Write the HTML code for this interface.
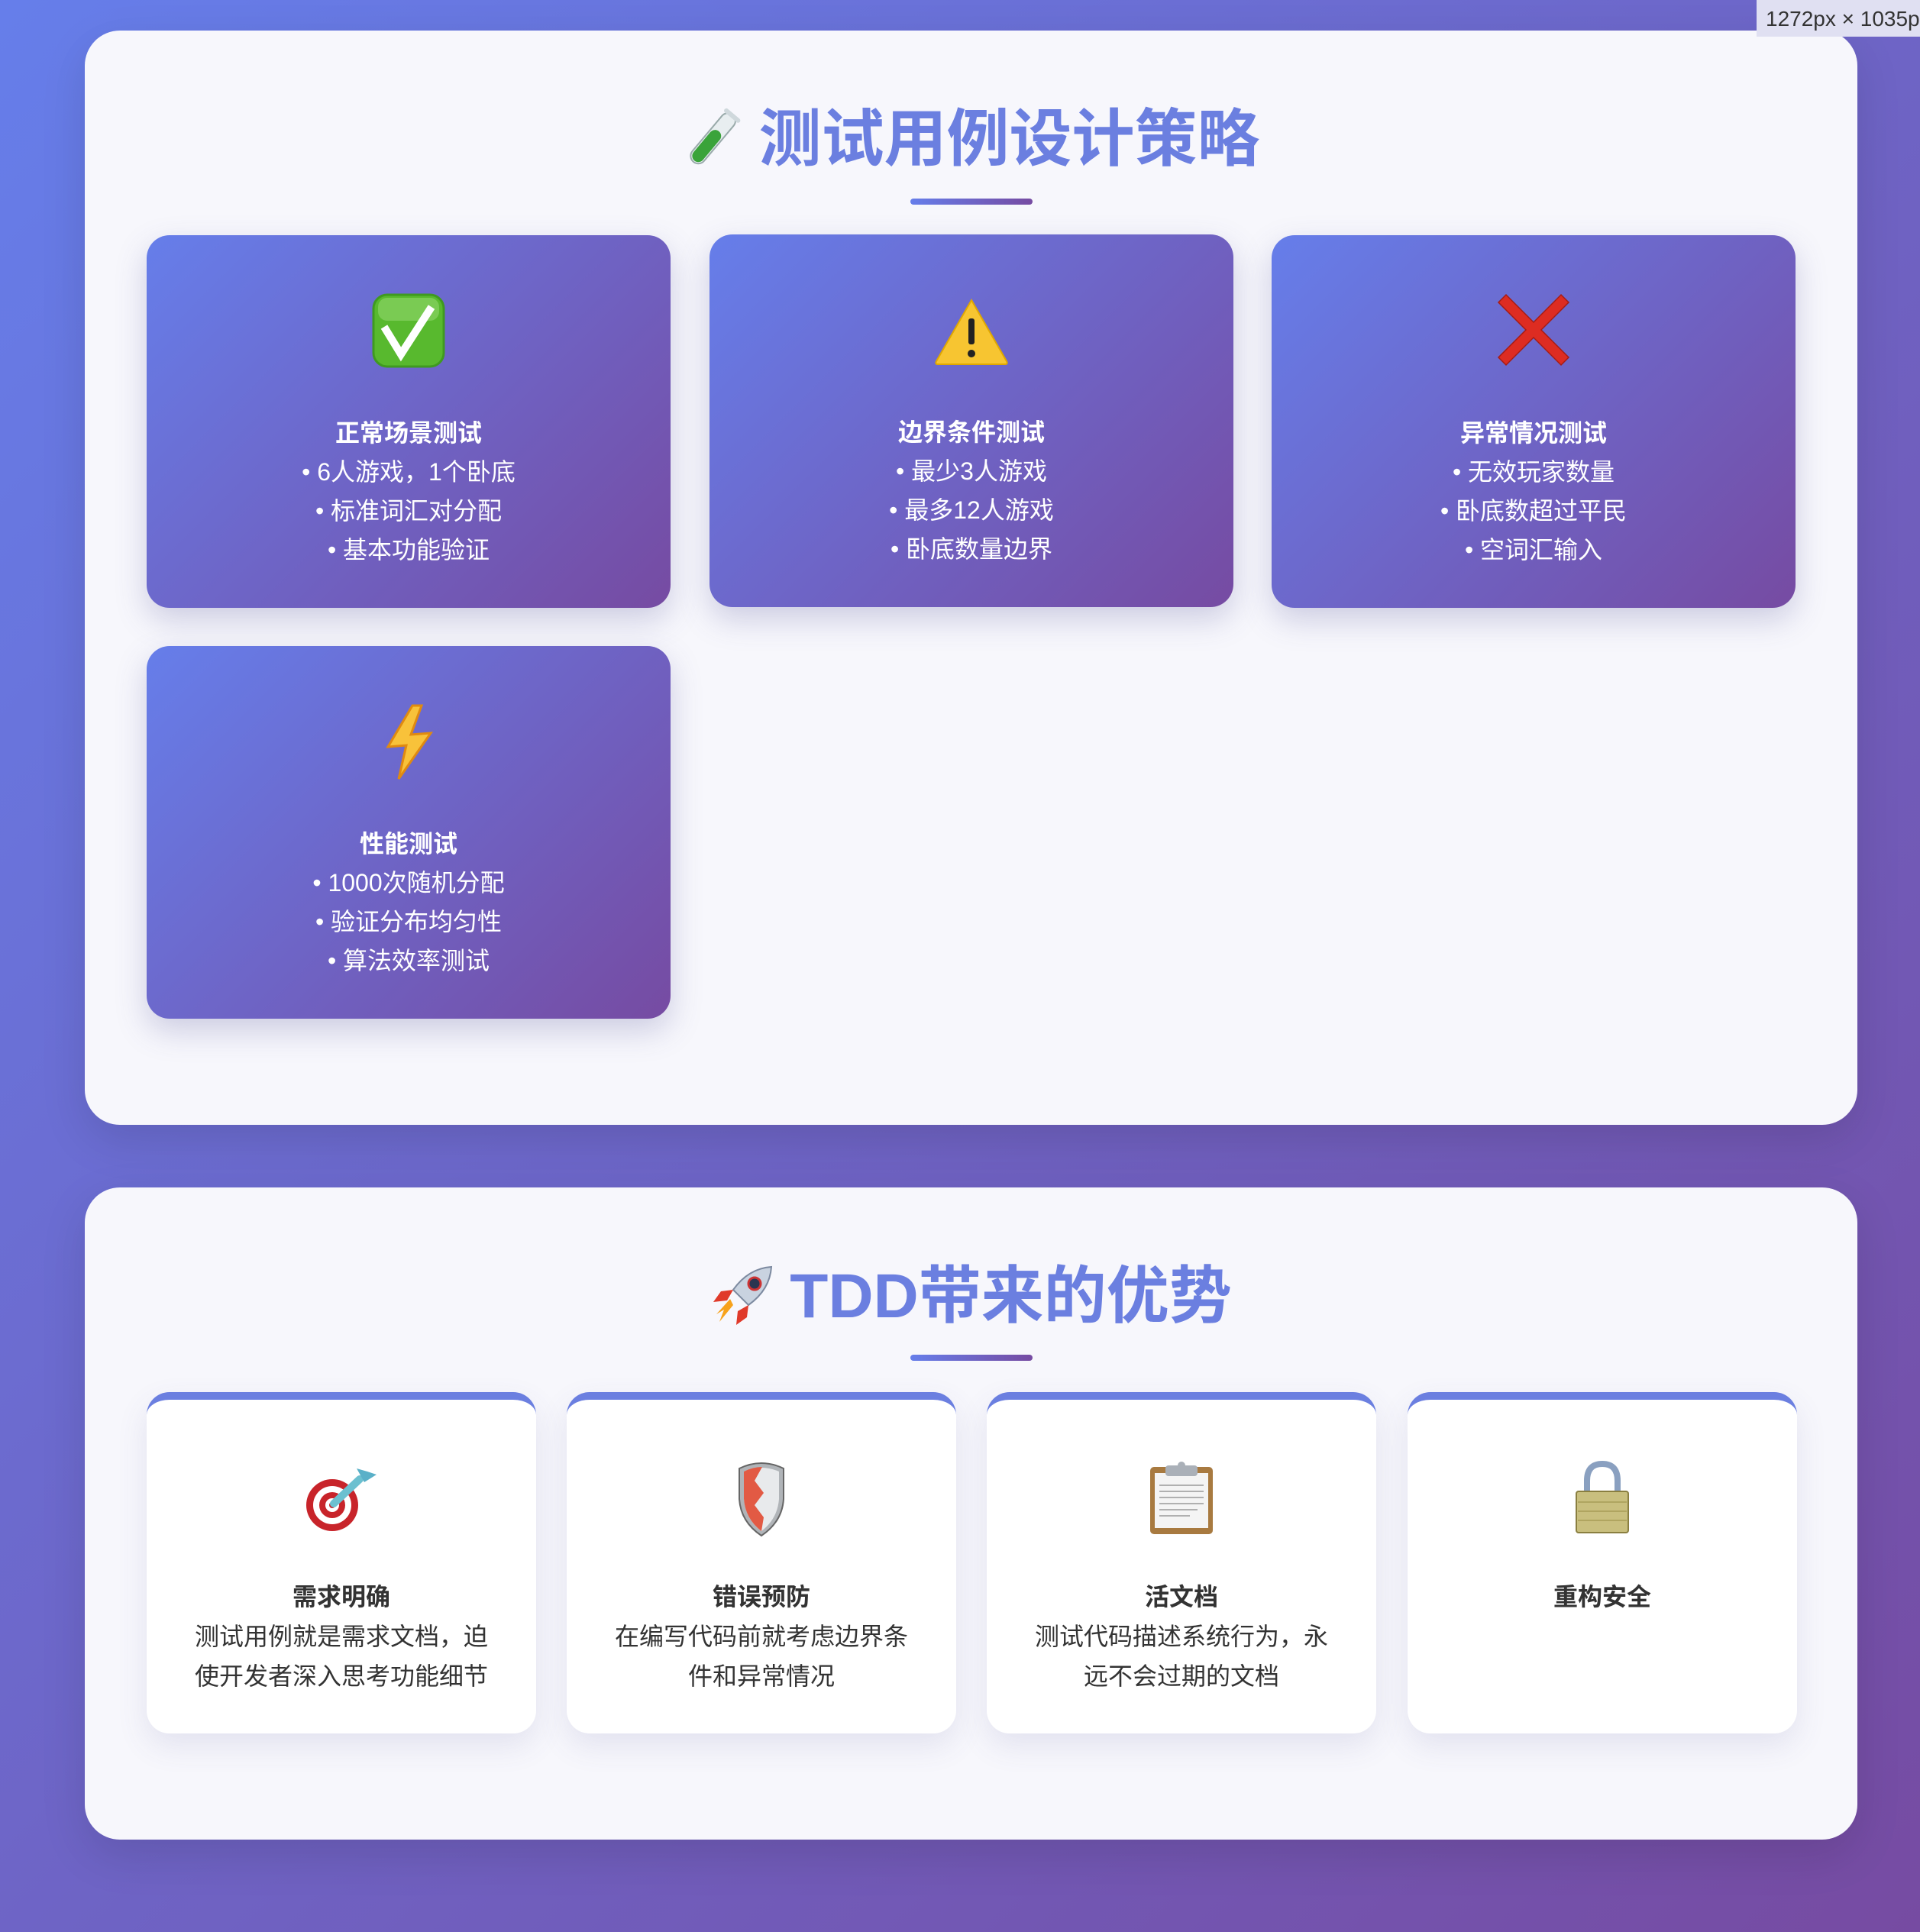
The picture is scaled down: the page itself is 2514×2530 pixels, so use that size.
<!DOCTYPE html>
<html><head><meta charset="utf-8"><style>
*{margin:0;padding:0;box-sizing:border-box}
html,body{width:2514px;height:2530px;overflow:hidden}
body{background:linear-gradient(135deg,#667eea 0%,#764ba2 100%);font-family:"Liberation Sans","Noto Sans CJK SC",sans-serif;position:relative}
.tip{position:absolute;left:2300px;top:0;width:214px;height:48px;background:#e0e0f2;color:#333;font-size:28px;line-height:50px;padding-left:12px;white-space:nowrap;overflow:hidden;z-index:5}
.panel{position:absolute;left:111px;width:2321px;background:#f7f7fc;border-radius:46px;box-shadow:0 20px 60px rgba(0,0,0,.12)}
.title{position:absolute;left:0;width:100%;text-align:center;font-weight:bold;font-size:82px;color:#6b7fe0;line-height:100px;white-space:nowrap}
.title svg{display:inline-block;vertical-align:middle;margin-right:20px;position:relative;top:-6px}
.uline{position:absolute;left:1081px;width:160px;height:8px;border-radius:4px;background:linear-gradient(90deg,#667eea,#764ba2)}
.gc{position:absolute;width:686px;height:488px;border-radius:30px;background:linear-gradient(135deg,#667eea,#764ba2);box-shadow:0 16px 40px rgba(80,80,150,.25);color:#fff;text-align:center}
.gc .ic{position:absolute;left:0;width:100%;top:76px;height:100px;display:flex;justify-content:center}
.gc .tx{position:absolute;left:0;width:100%;top:234px;font-size:32px;line-height:51px}
.gc b{display:block}
.wc{position:absolute;top:1823px;width:510px;height:447px;border-radius:30px;background:#fff;border-top:10px solid #6b7fe0;box-shadow:0 16px 40px rgba(80,80,150,.12);text-align:center;color:#333}
.wc .ic{position:absolute;left:0;width:100%;top:80px;height:110px;display:flex;justify-content:center}
.wc .tx{position:absolute;left:55px;right:55px;top:232px;font-size:32px;line-height:52px}
.wc b{display:block}
</style></head><body>
<div class="tip">1272px × 1035px</div>

<div class="panel" style="top:40px;height:1433px">
  <div class="title" style="top:93px"><svg width="80" height="86" viewBox="0 0 80 86"><g transform="rotate(40 40 43)"><rect x="30" y="2" width="20" height="80" rx="10" fill="#e8eef0" stroke="#9aa" stroke-width="2"/><rect x="32" y="30" width="16" height="50" rx="8" fill="#3aa33a"/><rect x="27" y="0" width="26" height="6" rx="3" fill="#cfd8dc"/></g></svg>测试用例设计策略</div>
  <div class="uline" style="top:220px"></div>
</div>

<div class="gc" style="left:192px;top:308px">
  <div class="ic"><svg width="96" height="98" viewBox="0 0 96 98"><rect x="2" y="2" width="92" height="94" rx="18" fill="#58b92e" stroke="#3f9a20" stroke-width="3"/><rect x="8" y="6" width="80" height="30" rx="12" fill="#7acb53"/><path d="M16 44 L38 80 L78 18" fill="none" stroke="#fff" stroke-width="10"/></svg></div>
  <div class="tx"><b>正常场景测试</b>• 6人游戏，1个卧底<br>• 标准词汇对分配<br>• 基本功能验证</div>
</div>
<div class="gc" style="left:929px;top:307px">
  <div class="ic"><svg width="100" height="90" viewBox="0 0 100 90" style="margin-top:6px"><path d="M50 4 L96 84 Q98 88 94 88 L6 88 Q2 88 4 84 Z" fill="#f7c531" stroke="#e0a800" stroke-width="2"/><rect x="46" y="28" width="8" height="34" rx="3" fill="#222"/><circle cx="50" cy="74" r="5" fill="#222"/></svg></div>
  <div class="tx"><b>边界条件测试</b>• 最少3人游戏<br>• 最多12人游戏<br>• 卧底数量边界</div>
</div>
<div class="gc" style="left:1665px;top:308px">
  <div class="ic"><svg width="96" height="96" viewBox="0 0 96 96" style="margin-top:0"><path d="M12 2 L48 38 L84 2 L94 12 L58 48 L94 84 L84 94 L48 58 L12 94 L2 84 L38 48 L2 12 Z" fill="#dd2c22" stroke="#a51c14" stroke-width="1.5"/></svg></div>
  <div class="tx"><b>异常情况测试</b>• 无效玩家数量<br>• 卧底数超过平民<br>• 空词汇输入</div>
</div>
<div class="gc" style="left:192px;top:846px">
  <div class="ic"><svg width="70" height="100" viewBox="0 0 70 100"><path d="M40 2 L8 56 L32 54 L22 98 L64 38 L38 40 L52 2 Z" fill="#f8c23a" stroke="#e08a10" stroke-width="3"/></svg></div>
  <div class="tx"><b>性能测试</b>• 1000次随机分配<br>• 验证分布均匀性<br>• 算法效率测试</div>
</div>

<div class="panel" style="top:1555px;height:854px">
  <div class="title" style="top:93px"><svg width="84" height="84" viewBox="0 0 84 84"><path d="M80 4 Q50 6 30 34 L50 54 Q78 34 80 4Z" fill="#c9d3e0" stroke="#7d8aa0" stroke-width="2"/><circle cx="58" cy="26" r="8" fill="#2a3550" stroke="#c33" stroke-width="3"/><path d="M30 34 L14 36 L4 50 L22 48Z M50 54 L48 70 L34 80 L36 62Z" fill="#e03a2a"/><path d="M30 54 L12 76 L18 60 L8 66 L26 46Z" fill="#f7a21b"/></svg>TDD带来的优势</div>
  <div class="uline" style="top:219px"></div>
</div>

<div class="wc" style="left:192px">
  <div class="ic"><svg width="100" height="96" viewBox="0 0 100 96"><ellipse cx="38" cy="58" rx="34" ry="34" fill="#c8242a"/><ellipse cx="38" cy="58" rx="25" ry="25" fill="#fff"/><ellipse cx="38" cy="58" rx="17" ry="17" fill="#c8242a"/><ellipse cx="38" cy="58" rx="9" ry="9" fill="#fff"/><ellipse cx="38" cy="58" rx="4" ry="4" fill="#c8242a"/><path d="M40 56 L74 24" stroke="#6cc0d0" stroke-width="10" stroke-linecap="round"/><path d="M70 10 L80 28 L96 18 L84 14Z" fill="#5ab0c8"/></svg></div>
  <div class="tx"><b>需求明确</b>测试用例就是需求文档，迫使开发者深入思考功能细节</div>
</div>
<div class="wc" style="left:742px">
  <div class="ic"><svg width="70" height="100" viewBox="0 0 70 100"><path d="M6 10 Q35 -4 64 10 L64 50 Q62 80 35 98 Q8 80 6 50Z" fill="#b0b4b8" stroke="#666" stroke-width="2"/><path d="M12 14 Q35 4 58 14 L58 50 Q56 76 35 92 Q14 76 12 50Z" fill="#e8eaec"/><path d="M12 14 Q24 8 36 8 L26 26 L38 42 L26 58 L38 74 L35 92 Q14 76 12 50Z" fill="#e25a44"/></svg></div>
  <div class="tx"><b>错误预防</b>在编写代码前就考虑边界条件和异常情况</div>
</div>
<div class="wc" style="left:1292px">
  <div class="ic"><svg width="86" height="98" viewBox="0 0 86 98"><rect x="2" y="8" width="82" height="88" rx="5" fill="#a87a40"/><rect x="8" y="16" width="70" height="72" fill="#f4f4f4"/><rect x="22" y="6" width="42" height="14" rx="4" fill="#aab0b8"/><circle cx="43" cy="6" r="5" fill="#aab0b8"/><g stroke="#999" stroke-width="1.5"><path d="M14 32h58M14 40h58M14 48h58M14 56h58M14 64h50M14 72h40"/></g></svg></div>
  <div class="tx"><b>活文档</b>测试代码描述系统行为，永远不会过期的文档</div>
</div>
<div class="wc" style="left:1843px">
  <div class="ic"><svg width="76" height="96" viewBox="0 0 76 96"><path d="M18 44 L18 26 Q18 4 38 4 Q58 4 58 26 L58 44" fill="none" stroke="#8aa0c0" stroke-width="8"/><rect x="4" y="40" width="68" height="54" rx="3" fill="#c9bf7e" stroke="#8a7f40" stroke-width="2"/><path d="M6 54h64M6 66h64M6 78h64" stroke="#b0a560" stroke-width="2"/></svg></div>
  <div class="tx"><b>重构安全</b></div>
</div>
</body></html>
